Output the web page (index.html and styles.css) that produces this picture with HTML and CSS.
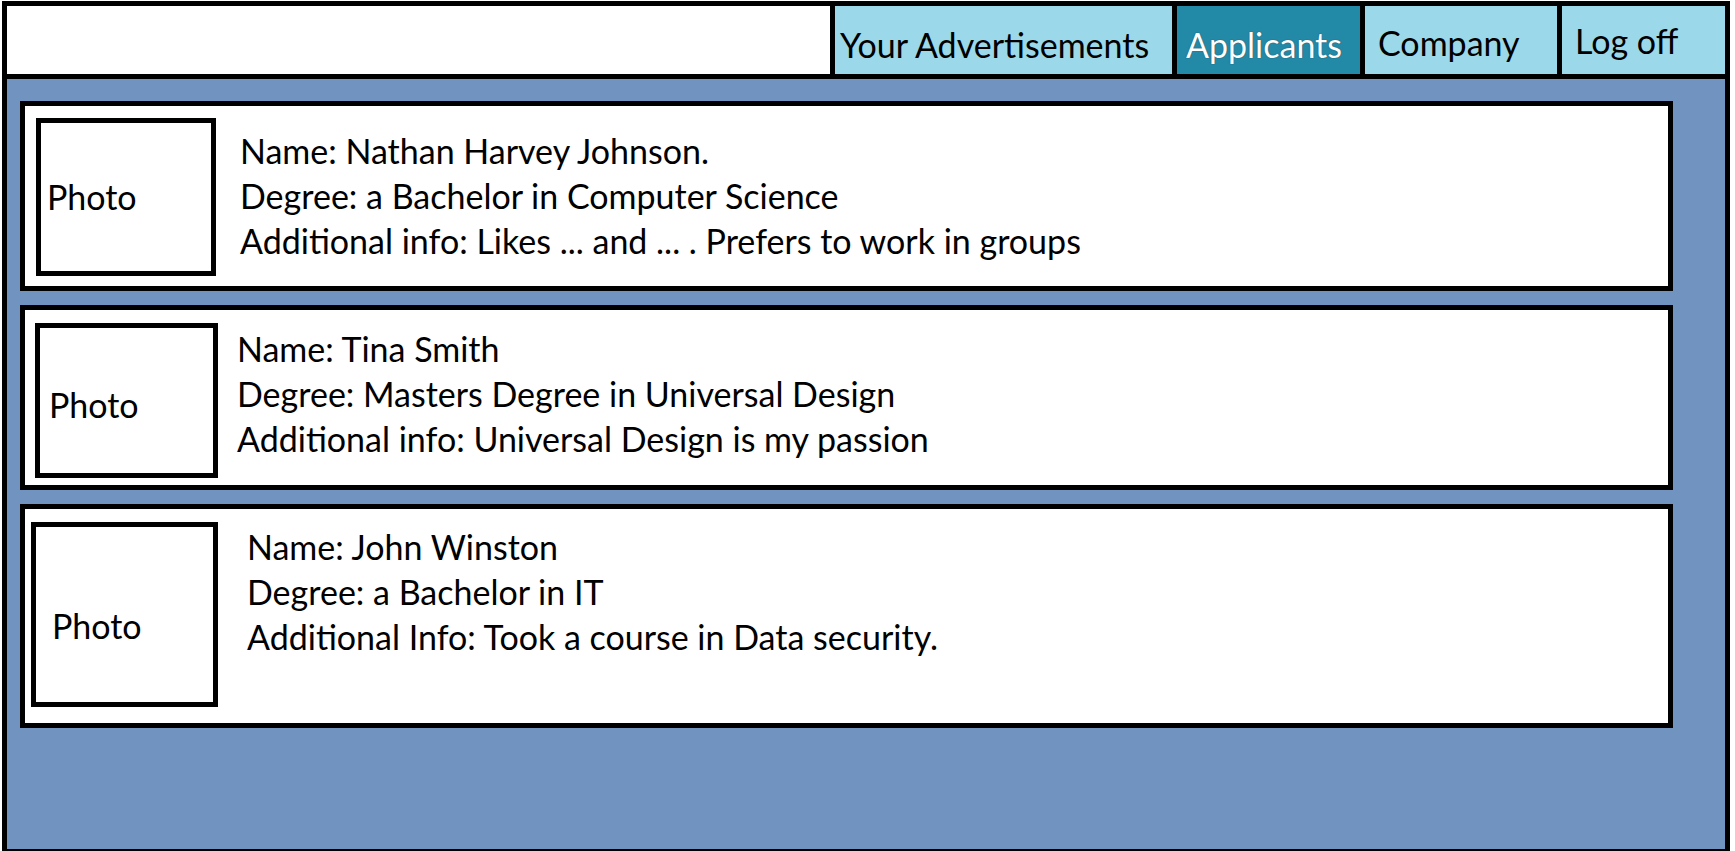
FILE: index.html
```html
<!DOCTYPE html>
<html lang="en">
<head>
<meta charset="utf-8">
<title>Applicants</title>
<link rel="stylesheet" href="styles.css">
</head>
<body>
<div class="frame">
  <header class="header">
    <div class="header-space"></div>
    <nav class="tabs">
      <div class="tab tab-ads"><span class="tab-label">Your Advertisements</span></div>
      <div class="tab tab-applicants tab-active"><span class="tab-label">Applicants</span></div>
      <div class="tab tab-company"><span class="tab-label">Company</span></div>
      <div class="tab tab-logoff"><span class="tab-label">Log off</span></div>
    </nav>
  </header>
  <main class="main">
    <section class="card card-1">
      <div class="photo"><span>Photo</span></div>
      <div class="info">
        <p>Name: Nathan Harvey Johnson.</p>
        <p>Degree: a Bachelor in Computer Science</p>
        <p>Additional info: Likes ... and ... . Prefers to work in groups</p>
      </div>
    </section>
    <section class="card card-2">
      <div class="photo"><span>Photo</span></div>
      <div class="info">
        <p>Name: Tina Smith</p>
        <p>Degree: Masters Degree in Universal Design</p>
        <p>Additional info: Universal Design is my passion</p>
      </div>
    </section>
    <section class="card card-3">
      <div class="photo"><span>Photo</span></div>
      <div class="info">
        <p>Name: John Winston</p>
        <p>Degree: a Bachelor in IT</p>
        <p>Additional Info: Took a course in Data security.</p>
      </div>
    </section>
  </main>
</div>
</body>
</html>
```
FILE: styles.css
```css
* {
  box-sizing: border-box;
}

html, body {
  margin: 0;
  padding: 0;
  overflow: hidden;
  background: #ffffff;
}

body {
  font-family: "Lato", "Open Sans", sans-serif;
  font-size: 34px;
  line-height: 45px;
  color: #000;
}

.frame {
  margin: 1px 0 0 2px;
  width: 1728px;
  height: 850px;
  border: 5px solid #000;
  border-bottom-width: 2px;
  display: flex;
  flex-direction: column;
  background: #7093bf;
}

/* ---------- header ---------- */
.header {
  display: flex;
  height: 73px;
  border-bottom: 5px solid #000;
  background: #fff;
  flex: 0 0 auto;
}

.header-space {
  flex: 1 1 auto;
}

.tabs {
  display: flex;
}

.tab {
  border-left: 5px solid #000;
  background: #9bd9ea;
  white-space: nowrap;
}

.tab-ads {
  width: 342px;
  padding: 16px 0 0 5px;
}

.tab-applicants {
  width: 188px;
  padding: 16px 0 0 9px;
}

.tab-company {
  width: 197px;
  padding: 14px 0 0 13px;
}

.tab-logoff {
  width: 168px;
  padding: 12px 0 0 13px;
}

.tab-active {
  background: #2289a6;
  color: #fff;
}

.tab-active .tab-label {
  text-shadow: 0 0 1px #1a3a48;
}

/* ---------- main ---------- */
.main {
  flex: 1 1 auto;
  display: flex;
  flex-direction: column;
  gap: 14px;
  padding: 22px 52px 0 13px;
}

.card {
  display: flex;
  align-items: flex-start;
  border: 5px solid #000;
  background: #fff;
}

.photo {
  border: 5px solid #000;
  flex: 0 0 auto;
}

.info p {
  margin: 0;
  white-space: nowrap;
}

.card-1 {
  height: 190px;
  padding: 12px 0 0 11px;
}
.card-1 .photo {
  width: 180px;
  height: 158px;
  padding: 51px 0 0 6px;
}
.card-1 .info {
  margin: 10px 0 0 24px;
}

.card-2 {
  height: 185px;
  padding: 13px 0 0 10px;
}
.card-2 .photo {
  width: 183px;
  height: 155px;
  padding: 54px 0 0 9px;
}
.card-2 .info {
  margin: 3px 0 0 19px;
}

.card-3 {
  height: 224px;
  padding: 13px 0 0 6px;
}
.card-3 .photo {
  width: 187px;
  height: 185px;
  padding: 76px 0 0 16px;
}
.card-3 .info {
  margin: 2px 0 0 29px;
}
```
